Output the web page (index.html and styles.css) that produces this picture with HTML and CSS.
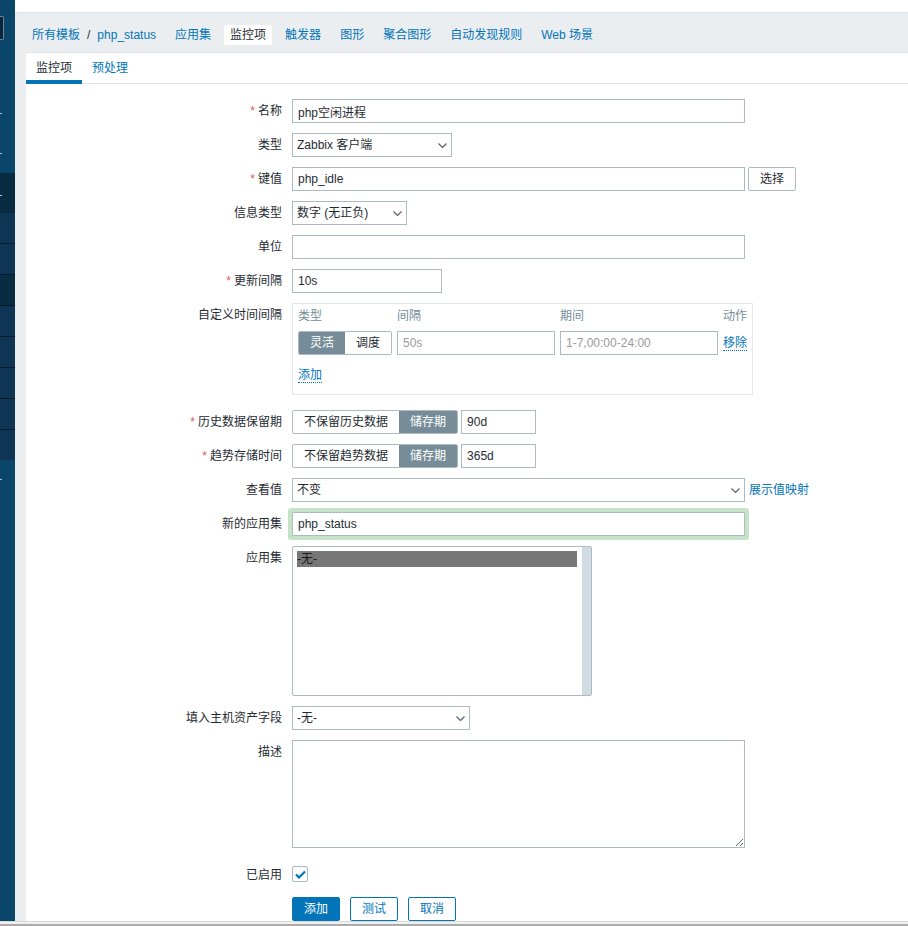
FILE: index.html
```
<!DOCTYPE html>
<html lang="zh-CN">
<head>
<meta charset="utf-8">
<title>监控项</title>
<link rel="stylesheet" href="styles.css">
</head>
<body>
<div class="layout">
  <div class="sidebar">
    <div class="sb-top">
      <span class="sb-search"></span>
      <span class="sb-dot dot1"></span>
      <span class="sb-dot dot2"></span>
    </div>
    <div class="sb-sel"><span class="sb-dot dot3"></span></div>
    <ul class="sb-sub">
      <li></li><li></li><li class="on"></li><li></li><li></li><li></li><li></li><li></li>
    </ul>
    <div class="sb-rest"><span class="sb-dot dot4"></span></div>
  </div>

  <div class="main">
    <div class="topstrip"></div>
    <ul class="nav">
      <li><a href="#">所有模板</a><span class="sep">/</span><a href="#">php_status</a></li>
      <li><a href="#">应用集</a></li>
      <li class="active">监控项</li>
      <li><a href="#">触发器</a></li>
      <li><a href="#">图形</a></li>
      <li><a href="#">聚合图形</a></li>
      <li><a href="#">自动发现规则</a></li>
      <li><a href="#">Web 场景</a></li>
    </ul>

    <div class="panel">
      <ul class="tabs">
        <li class="active">监控项</li>
        <li><a href="#">预处理</a></li>
      </ul>

      <div class="form">
        <label class="lbl req">名称</label>
        <div class="fld"><input class="tb w-std" type="text" value="php空闲进程"></div>

        <label class="lbl">类型</label>
        <div class="fld">
          <div class="sel w-160"><span>Zabbix 客户端</span><svg class="chev" width="9" height="5" viewBox="0 0 9 5"><polyline points="0.5,0.5 4.5,4.5 8.5,0.5" /></svg></div>
        </div>

        <label class="lbl req">键值</label>
        <div class="fld">
          <input class="tb w-std" type="text" value="php_idle"><button class="btn-alt pick">选择</button>
        </div>

        <label class="lbl">信息类型</label>
        <div class="fld">
          <div class="sel w-115"><span>数字 (无正负)</span><svg class="chev" width="9" height="5" viewBox="0 0 9 5"><polyline points="0.5,0.5 4.5,4.5 8.5,0.5" /></svg></div>
        </div>

        <label class="lbl">单位</label>
        <div class="fld"><input class="tb w-std" type="text" value=""></div>

        <label class="lbl req">更新间隔</label>
        <div class="fld"><input class="tb w-150" type="text" value="10s"></div>

        <label class="lbl">自定义时间间隔</label>
        <div class="fld pad-b">
          <div class="cib">
            <div class="cib-grid">
              <span class="cib-head">类型</span>
              <span class="cib-head">间隔</span>
              <span class="cib-head">期间</span>
              <span class="cib-head">动作</span>

              <div class="rg"><span class="on">灵活</span><span>调度</span></div>
              <input class="tb" type="text" placeholder="50s">
              <input class="tb" type="text" placeholder="1-7,00:00-24:00">
              <a class="act" href="#">移除</a>
            </div>
            <div class="cib-add"><a class="act" href="#">添加</a></div>
          </div>
        </div>

        <label class="lbl req">历史数据保留期</label>
        <div class="fld">
          <div class="rg"><span>不保留历史数据</span><span class="on">储存期</span></div><input class="tb w-75 after-rg" type="text" value="90d">
        </div>

        <label class="lbl req">趋势存储时间</label>
        <div class="fld">
          <div class="rg"><span>不保留趋势数据</span><span class="on">储存期</span></div><input class="tb w-75 after-rg" type="text" value="365d">
        </div>

        <label class="lbl">查看值</label>
        <div class="fld">
          <div class="sel w-std"><span>不变</span><svg class="chev" width="9" height="5" viewBox="0 0 9 5"><polyline points="0.5,0.5 4.5,4.5 8.5,0.5" /></svg></div><a class="link map" href="#">展示值映射</a>
        </div>

        <label class="lbl">新的应用集</label>
        <div class="fld"><input class="tb w-std hl" type="text" value="php_status"></div>

        <label class="lbl">应用集</label>
        <div class="fld">
          <div class="lb">
            <div class="lb-list"><div class="lb-opt">-无-</div></div>
            <div class="lb-scroll"></div>
          </div>
        </div>

        <label class="lbl">填入主机资产字段</label>
        <div class="fld">
          <div class="sel w-178"><span>-无-</span><svg class="chev" width="9" height="5" viewBox="0 0 9 5"><polyline points="0.5,0.5 4.5,4.5 8.5,0.5" /></svg></div>
        </div>

        <label class="lbl">描述</label>
        <div class="fld pad-b"><textarea class="ta"></textarea></div>

        <label class="lbl">已启用</label>
        <div class="fld">
          <span class="cb"><svg width="11" height="9" viewBox="0 0 11 9"><polyline points="1,4.5 4,7.5 10,1.5" /></svg></span>
        </div>

        <span></span>
        <div class="fld buttons">
          <button class="btn">添加</button>
          <button class="btn-alt">测试</button>
          <button class="btn-alt">取消</button>
        </div>
      </div>
    </div>
  </div>
</div>
<div class="hbar"></div>
</body>
</html>
```

FILE: styles.css
```
* { box-sizing: border-box; }
html, body { margin: 0; padding: 0; background: #fff; overflow: hidden; }
body { font: 12px/14px "Liberation Sans", Arial, "Noto Sans CJK SC", sans-serif; color: #1f2c33; }
a { color: #0275b8; text-decoration: none; }
ul { list-style: none; margin: 0; padding: 0; }

.layout { display: flex; height: 921px; overflow: hidden; }

/* left menu, only its edge is visible */
.sidebar { width: 15px; flex: none; display: flex; flex-direction: column; background: #0a466a; }
.sb-top { height: 173px; }
.sb-search { display: block; width: 4px; height: 24px; margin-top: 16px;
  background: #08263a; border: 1px solid #6f8799; border-left: 0; border-radius: 0 2px 2px 0; }
.sb-dot { display: block; width: 2px; height: 1px; background: #b7c4ce; }
.dot1 { margin-top: 73px; }
.dot2 { margin-top: 39px; }
.sb-sel { height: 40px; background: #092b40; padding-top: 22px; }
.sb-sub li { height: 31px; background: #0e3654; border-top: 1px solid #061a29; }
.sb-sub li:first-child { border-top: 0; height: 30px; }
.sb-sub li.on { background: #0a2c43; }
.sb-rest { flex: 1; padding-top: 19px; }

.main { flex: 1; background: #ebeef0; }
.topstrip { height: 13px; background: #fff; border-bottom: 1px solid #dde2e6; }

.nav { height: 39px; display: flex; align-items: flex-end; gap: 7px; padding: 0 0 7px 11px; }
.nav li { padding: 0 6px; line-height: 20px; white-space: nowrap; }
.nav li.active { background: #fff; color: #1f2c33; border-radius: 2px; }
.nav .sep { margin: 0 7px; color: #1f2c33; }

.panel { margin-left: 11px; background: #fff; border-top: 1px solid #dfe4e7; height: 869px; }

.tabs { display: flex; height: 31px; border-bottom: 1px solid #dfe4e7; }
.tabs li { padding: 0 10px; height: 30px; line-height: 30px; }
.tabs li.active { box-shadow: inset 0 -4px 0 #0275b8; height: 31px; }

.form { display: grid; grid-template-columns: 256px 1fr; column-gap: 10px; row-gap: 10px; padding-top: 15px; }
.lbl { text-align: right; line-height: 24px; white-space: nowrap; }
.req::before { content: "*"; color: #e45959; margin-right: 3px; }
.fld { display: flex; align-items: flex-start; min-height: 24px; }
.pad-b { padding-bottom: 5px; }

.tb { height: 24px; border: 1px solid #acbbc2; padding: 0 5px; font: inherit; color: #1f2c33;
  background: #fff; border-radius: 0; outline: none; margin: 0; }
.tb::placeholder { color: #9b9b9b; }
.w-std { width: 453px; }
.w-150 { width: 150px; }
.w-75 { width: 75px; }
.w-160 { width: 160px; }
.w-115 { width: 115px; }
.w-178 { width: 178px; }
.hl { box-shadow: 0 0 0 4px #c6e3c9; border-radius: 1px; }

.sel { display: flex; align-items: center; justify-content: space-between; height: 24px;
  border: 1px solid #acbbc2; padding: 0 4px 0 4px; background: #fff; white-space: nowrap; }
.chev { flex: none; }
.chev polyline { fill: none; stroke: #59656c; stroke-width: 1.2; }

.link.map { margin-left: 4px; line-height: 24px; }

.btn, .btn-alt { height: 24px; padding: 0 11px; font: inherit; border-radius: 2px; margin: 0; cursor: pointer; }
.btn { background: #0275b8; border: 1px solid #0275b8; color: #fff; }
.btn-alt { background: #fff; border: 1px solid #0275b8; color: #0275b8; }
.btn-alt.pick { margin-left: 3px; border-color: #acbbc2; color: #1f2c33; }
.buttons { gap: 10px; padding-top: 0; }

/* custom intervals */
.cib { width: 461px; border: 1px solid #e3e7ea; padding: 5px 5px 0 5px; }
.cib-grid { display: grid; grid-template-columns: 94px 158px 158px 24px; column-gap: 5px; row-gap: 8px; }
.cib-head { color: #768d99; line-height: 14px; white-space: nowrap; }
.cib-grid .tb { width: 158px; }
.act { border-bottom: 1px dotted #0275b8; align-self: center; line-height: 14px; white-space: nowrap; }
.cib-add { height: 39px; padding-top: 13px; }
.cib-add .act { display: inline-block; }

.rg { display: inline-flex; height: 24px; border: 1px solid #acbbc2; border-radius: 2px; overflow: hidden; flex: none; }
.rg span { padding: 0 11px; line-height: 22px; white-space: nowrap; background: #fff; }
.rg span.on { background: #768d99; color: #fff; }
.after-rg { margin-left: 3px; }

.lb { width: 300px; height: 150px; border: 1px solid #acbbc2; border-radius: 2px; display: flex; }
.lb-list { flex: 1; padding: 4px 5px 4px 4px; }
.lb-opt { background: #777; color: #1a1a1a; line-height: 16px; }
.lb-scroll { width: 9px; background: #d0dbe2; }

.ta { width: 453px; height: 108px; border: 1px solid #acbbc2; padding: 4px 5px; font: inherit;
  border-radius: 0; margin: 0; outline: none; }

.cb { display: flex; align-items: center; justify-content: center; width: 16px; height: 16px;
  margin-top: 3px; border: 1px solid #acbbc2; border-radius: 2px; background: #fff; }
.cb polyline { fill: none; stroke: #0275b8; stroke-width: 2.2; }

.hbar { height: 5px; background: #f0f0f0; border-top: 1px solid #d9d9d9; border-bottom: 2px solid #ababab; }
```
